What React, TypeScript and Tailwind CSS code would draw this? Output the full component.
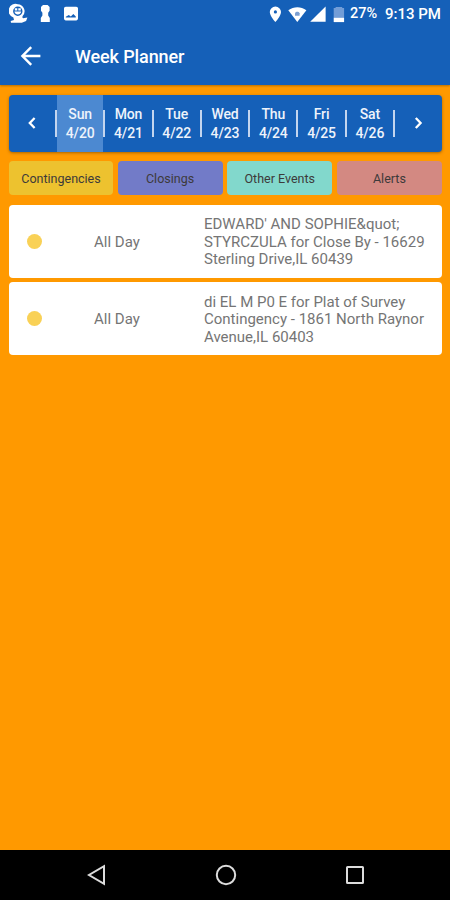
const days = [
  { name: "Sun", date: "4/20" },
  { name: "Mon", date: "4/21" },
  { name: "Tue", date: "4/22" },
  { name: "Wed", date: "4/23" },
  { name: "Thu", date: "4/24" },
  { name: "Fri", date: "4/25" },
  { name: "Sat", date: "4/26" },
];

const categories = [
  { label: "Contingencies", color: "bg-[#edc22f]" },
  { label: "Closings", color: "bg-[#727bc8]" },
  { label: "Other Events", color: "bg-[#82d8cc]" },
  { label: "Alerts", color: "bg-[#d38982]" },
];

const events = [
  {
    time: "All Day",
    lines: [
      "EDWARD' AND SOPHIE&quot;",
      "STYRCZULA for Close By - 16629",
      "Sterling Drive,IL 60439",
    ],
  },
  {
    time: "All Day",
    lines: [
      "di EL M P0 E for Plat of Survey",
      "Contingency - 1861 North Raynor",
      "Avenue,IL 60403",
    ],
  },
];

function StatusBar() {
  return (
    <div className="flex h-7 items-center justify-between pl-[9px] pr-2 text-white">
      <svg width="72" height="24" viewBox="0 0 72 24" fill="currentColor">
        <path
          fillRule="evenodd"
          d="M8.8 2.2a7 7 0 0 1 5 11.6c-.6 1-.6 2 .3 2.4l4.3-.6-1.3 3.3-4.3 1.9H2l-.3-1.7 3.3-1-.6-2.6A7 7 0 0 1 8.8 2.2Zm0 2.3a4.7 4.7 0 1 0 0 9.4 4.7 4.7 0 0 0 0-9.4Z"
        />
        <path d="M5.8 6.3h2.5v2.3H5.8zM9.3 6.3h2.5v2.3H9.3zM5.4 9.5h6.8c-.5 3.9-6.2 3.9-6.8 0Z" />
        <path d="M34 3h4.6l2 2v3.8l-1.4 2v2.6l1.6 2.6v4h-9v-4l1.6-2.6v-2.6l-1.4-2V5z" />
        <path
          fillRule="evenodd"
          d="M56.8 4.8h10.4c1 0 1.8.8 1.8 1.8v10c0 1-.8 1.8-1.8 1.8H56.8c-1 0-1.8-.8-1.8-1.8v-10c0-1 .8-1.8 1.8-1.8Zm0 10.8h10v-1.1l-2.5-2.6-2.5 2.5-2-1.5-3 1.9Z"
        />
      </svg>
      <div className="flex items-center">
        <svg width="76" height="18" viewBox="0 0 76 18" fill="currentColor">
          <path
            fillRule="evenodd"
            d="M6.4 1.5A5.6 5.6 0 0 0 .8 7.1c0 4.1 5.6 10 5.6 10s5.6-5.9 5.6-10a5.6 5.6 0 0 0-5.6-5.6Zm0 3.8a1.6 1.6 0 1 1 0 3.2 1.6 1.6 0 0 1 0-3.2Z"
          />
          <path d="M19.3 5.2c5.5-4.1 12.6-4.1 18.1 0L28.3 17 19.3 5.2Z" />
          <path d="M26 8.2c1-1.8 3.6-1.8 4.6 0v2.6h-4.6z" fill="#7b9fd2" />
          <path d="M56.6 1.5v15.3H41.2z" />
          <path d="M66.6 1.9h6.6v1.2h1.9v9.6H64.7V3.1h1.9z" fill="#729dd7" />
          <path d="M64.7 12.7h10.4v4.4H64.7z" />
        </svg>
        <span className="ml-[5px] w-[27px] whitespace-nowrap pt-px text-[14.5px] font-medium leading-none">
          27%
        </span>
        <span className="ml-[8px] w-[57px] whitespace-nowrap text-[15px] font-medium leading-none">
          9:13 PM
        </span>
      </div>
    </div>
  );
}

function Header() {
  return (
    <header className="h-[85px] shrink-0 bg-[#1560b8] shadow-[0_1px_2px_rgba(90,60,0,0.45)]">
      <StatusBar />
      <div className="flex h-14 items-center pl-[19px] text-white">
        <svg
          width="24"
          height="24"
          viewBox="0 0 24 24"
          fill="none"
          stroke="currentColor"
          strokeWidth="2.4"
        >
          <path d="M21.4 12H3.4M12.2 3.2 3.4 12l8.8 8.8" />
        </svg>
        <h1 className="ml-8 text-[18px] font-medium tracking-[-0.1px]">
          Week Planner
        </h1>
      </div>
    </header>
  );
}

function Divider() {
  return <span className="h-[27px] w-[2px] shrink-0 bg-[#c3d5ef]" />;
}

function Chevron({ path }: { path: string }) {
  return (
    <svg
      width="10"
      height="14"
      viewBox="0 0 10 14"
      fill="none"
      stroke="white"
      strokeWidth="2.3"
    >
      <path d={path} />
    </svg>
  );
}

function DayBar() {
  return (
    <nav className="flex h-[57px] items-center overflow-hidden rounded-[4px] bg-[#1560b8] shadow-[0_1px_3px_rgba(80,50,0,0.5)]">
      <button className="flex h-full w-[46px] shrink-0 items-center justify-center pb-px">
        <Chevron path="M7.6 2 2.8 7l4.8 5" />
      </button>
      <Divider />
      {days.map((day, i) => (
        <div key={day.date} className="flex h-full flex-1 items-center">
          <div
            className={`flex h-full flex-1 flex-col items-center justify-center text-[14px] font-medium leading-[19px] tracking-[-0.15px] text-[#eef3fb] ${
              i === 0 ? "bg-[#4c89d1]" : ""
            }`}
          >
            <span>{day.name}</span>
            <span>{day.date}</span>
          </div>
          <Divider />
        </div>
      ))}
      <button className="flex h-full w-[47px] shrink-0 items-center justify-center pb-px">
        <Chevron path="m2.8 2 4.8 5-4.8 5" />
      </button>
    </nav>
  );
}

export default function App() {
  return (
    <div className="flex h-[900px] w-[450px] flex-col overflow-hidden bg-[#ff9900] font-['Roboto',sans-serif]">
      <Header />
      <main className="flex-1 pl-[9px] pr-2 pt-[10px]">
        <DayBar />
        <div className="mt-[9px] grid grid-cols-[104px_1fr_1fr_1fr] gap-[4.5px]">
          {categories.map((category) => (
            <div
              key={category.label}
              className={`flex h-[34px] items-center justify-center rounded-[4px] pt-[2px] text-[12.5px] text-[#3d3a3a] ${category.color}`}
            >
              {category.label}
            </div>
          ))}
        </div>
        <div className="mt-[9.5px] flex flex-col gap-[4px]">
          {events.map((event) => (
            <article
              key={event.lines[0]}
              className="flex h-[73.3px] items-center rounded-[4px] bg-white text-[15px] leading-[17.5px] text-[#757575]"
            >
              <span className="ml-[18px] size-[15px] shrink-0 rounded-full bg-[#f9d156]" />
              <span className="ml-[52px] w-[110px] shrink-0 pt-[3px]">
                {event.time}
              </span>
              <p className="whitespace-nowrap pt-[3px]">
                {event.lines.map((line) => (
                  <span key={line} className="block">
                    {line}
                  </span>
                ))}
              </p>
            </article>
          ))}
        </div>
      </main>
      <footer className="flex h-[50.5px] shrink-0 items-center justify-between bg-black pl-[86px] pr-[84px] text-[#dcdcdc]">
        <svg width="22" height="24" viewBox="0 0 22 24" fill="none" stroke="currentColor" strokeWidth="2">
          <path d="M18 3.2v17.6L3 12z" />
        </svg>
        <svg width="24" height="24" viewBox="0 0 24 24" fill="none" stroke="currentColor" strokeWidth="2">
          <circle cx="12" cy="12" r="9.2" />
        </svg>
        <svg width="22" height="24" viewBox="0 0 22 24" fill="none" stroke="currentColor" strokeWidth="2">
          <rect x="3" y="4" width="16" height="16" rx="0.5" />
        </svg>
      </footer>
    </div>
  );
}
